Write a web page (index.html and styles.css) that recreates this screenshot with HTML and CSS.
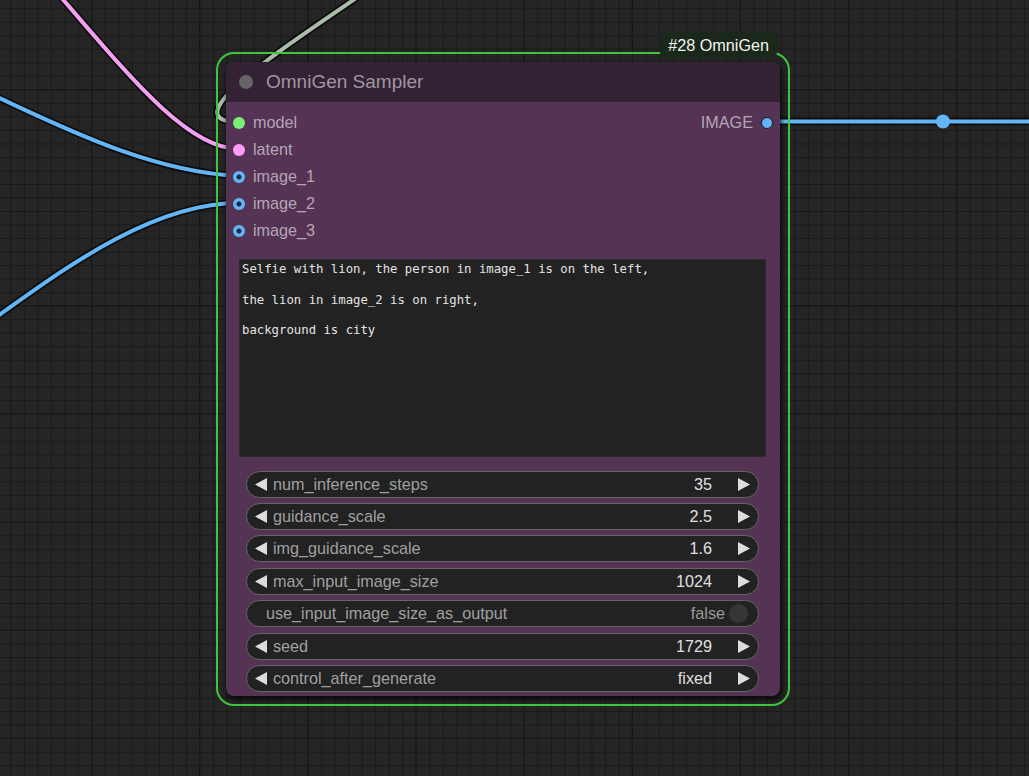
FILE: index.html
```html
<!DOCTYPE html>
<html>
<head>
<meta charset="utf-8">
<link rel="stylesheet" href="styles.css">
</head>
<body>
<div class="canvas">
  <svg class="wires" width="1029" height="776" viewBox="0 0 1029 776">
    <g class="wire-shadow">
      <path d="M365 -8 C280 50, 170 122, 239 122"/>
      <path d="M60 -4 C133 81, 189 149, 239 149"/>
      <path d="M-5 96 C60 126, 150 172, 239 176"/>
      <path d="M-5 318 C60 272, 150 203, 239 203"/>
      <path d="M767 121.5 L1040 121.5"/>
    </g>
    <path class="wire wire-model" d="M365 -8 C280 50, 170 122, 239 122"/>
    <path class="wire wire-latent" d="M60 -4 C133 81, 189 149, 239 149"/>
    <path class="wire wire-image" d="M-5 96 C60 126, 150 172, 239 176"/>
    <path class="wire wire-image" d="M-5 318 C60 272, 150 203, 239 203"/>
    <path class="wire wire-image" d="M767 121.5 L1040 121.5"/>
    <circle class="wire-mid" cx="943" cy="121.5" r="7"/>
  </svg>

  <div class="node">
    <div class="badge">#28 OmniGen</div>
    <div class="title">
      <span class="title-dot"></span>
      <span class="title-text">OmniGen Sampler</span>
    </div>
    <div class="slots">
      <div class="inputs">
        <div class="slot"><span class="dot dot-model"></span><span>model</span></div>
        <div class="slot"><span class="dot dot-latent"></span><span>latent</span></div>
        <div class="slot"><span class="dot dot-image"></span><span>image_1</span></div>
        <div class="slot"><span class="dot dot-image"></span><span>image_2</span></div>
        <div class="slot"><span class="dot dot-image"></span><span>image_3</span></div>
      </div>
      <div class="outputs">
        <div class="slot"><span>IMAGE</span><span class="dot dot-out"></span></div>
      </div>
    </div>
    <div class="prompt">Selfie with lion, the person in image_1 is on the left,

the lion in image_2 is on right,

background is city</div>
    <div class="widgets">
      <div class="widget">
        <svg class="arrow" width="12" height="13" viewBox="0 0 12 13"><polygon points="0,6.5 12,0 12,13"/></svg>
        <span class="w-label">num_inference_steps</span>
        <span class="w-value">35</span>
        <svg class="arrow" width="12" height="13" viewBox="0 0 12 13"><polygon points="12,6.5 0,0 0,13"/></svg>
      </div>
      <div class="widget">
        <svg class="arrow" width="12" height="13" viewBox="0 0 12 13"><polygon points="0,6.5 12,0 12,13"/></svg>
        <span class="w-label">guidance_scale</span>
        <span class="w-value">2.5</span>
        <svg class="arrow" width="12" height="13" viewBox="0 0 12 13"><polygon points="12,6.5 0,0 0,13"/></svg>
      </div>
      <div class="widget">
        <svg class="arrow" width="12" height="13" viewBox="0 0 12 13"><polygon points="0,6.5 12,0 12,13"/></svg>
        <span class="w-label">img_guidance_scale</span>
        <span class="w-value">1.6</span>
        <svg class="arrow" width="12" height="13" viewBox="0 0 12 13"><polygon points="12,6.5 0,0 0,13"/></svg>
      </div>
      <div class="widget">
        <svg class="arrow" width="12" height="13" viewBox="0 0 12 13"><polygon points="0,6.5 12,0 12,13"/></svg>
        <span class="w-label">max_input_image_size</span>
        <span class="w-value">1024</span>
        <svg class="arrow" width="12" height="13" viewBox="0 0 12 13"><polygon points="12,6.5 0,0 0,13"/></svg>
      </div>
      <div class="widget toggle">
        <span class="w-label">use_input_image_size_as_output</span>
        <span class="t-value">false</span>
        <span class="knob"></span>
      </div>
      <div class="widget">
        <svg class="arrow" width="12" height="13" viewBox="0 0 12 13"><polygon points="0,6.5 12,0 12,13"/></svg>
        <span class="w-label">seed</span>
        <span class="w-value">1729</span>
        <svg class="arrow" width="12" height="13" viewBox="0 0 12 13"><polygon points="12,6.5 0,0 0,13"/></svg>
      </div>
      <div class="widget">
        <svg class="arrow" width="12" height="13" viewBox="0 0 12 13"><polygon points="0,6.5 12,0 12,13"/></svg>
        <span class="w-label">control_after_generate</span>
        <span class="w-value">fixed</span>
        <svg class="arrow" width="12" height="13" viewBox="0 0 12 13"><polygon points="12,6.5 0,0 0,13"/></svg>
      </div>
    </div>
  </div>
</div>
</body>
</html>
```

FILE: styles.css
```css
* { box-sizing: border-box; }

html, body {
  margin: 0;
  padding: 0;
  background: #232323;
  font-family: "Liberation Sans", Arial, sans-serif;
}

.canvas {
  position: relative;
  width: 1029px;
  height: 776px;
  overflow: hidden;
  background-color: #252525;
  background-image:
    linear-gradient(90deg, #171717 1px, transparent 1px),
    linear-gradient(180deg, #171717 1px, transparent 1px),
    linear-gradient(90deg, #1a1a1a 1px, transparent 1px),
    linear-gradient(180deg, #1a1a1a 1px, transparent 1px);
  background-size: 108.13px 108.13px, 108.13px 108.13px, 13.516px 13.516px, 13.516px 13.516px;
  background-position: 91px 0, 0 89px, 10.3px 0, 0 8.3px;
}

.wires {
  position: absolute;
  left: 0;
  top: 0;
}

.wire-shadow path {
  fill: none;
  stroke: rgba(0, 0, 0, 0.65);
  stroke-width: 7.5;
}

.wire {
  fill: none;
  stroke-width: 4;
}

.wire-model { stroke: #aabcaa; }
.wire-latent { stroke: #f4a0f2; }
.wire-image { stroke: #64b5f6; }

.wire-mid {
  fill: #64b5f6;
}

/* node */
.node {
  position: absolute;
  left: 226px;
  top: 62px;
  width: 554px;
  height: 634px;
  background: #553355;
  border-radius: 8px;
  box-shadow: 1px 3px 4px 1px rgba(0, 0, 0, 0.65);
  display: flex;
  flex-direction: column;
}

.node::before {
  content: "";
  position: absolute;
  left: -10px;
  top: -10px;
  right: -10px;
  bottom: -10px;
  border: 2px solid #3ec43e;
  border-radius: 18px;
  pointer-events: none;
}

.badge {
  position: absolute;
  right: 3px;
  top: -30px;
  height: 26px;
  padding: 0 8px;
  background: #1a281a;
  border-radius: 6px;
  color: #f2f2f2;
  font-size: 16.2px;
  line-height: 26px;
  z-index: 2;
}

.title {
  height: 40px;
  flex: none;
  background: #332233;
  border-radius: 8px 8px 0 0;
  display: flex;
  align-items: center;
  gap: 13px;
  padding-left: 13px;
}

.title-dot {
  width: 14px;
  height: 14px;
  border-radius: 50%;
  background: #676367;
  flex: none;
}

.title-text {
  color: #a096a0;
  font-size: 19px;
}

.slots {
  display: flex;
  justify-content: space-between;
  padding-top: 7px;
}

.inputs { padding-left: 7px; }
.outputs { padding-right: 7px; }

.slot {
  height: 27px;
  display: flex;
  align-items: center;
  gap: 8px;
  color: #b4a6b4;
  font-size: 16.2px;
}

.dot {
  width: 12px;
  height: 12px;
  border-radius: 50%;
  flex: none;
}

.dot-model { background: #7af07a; }
.dot-latent { background: #ff9cf9; }
.dot-image {
  background: radial-gradient(circle, #1d2d45 0 2.2px, #64b5f6 2.9px);
}
.dot-out {
  background: #64b5f6;
  border: 1.5px solid #1a1a2a;
}

.prompt {
  margin: 15px 14px 0 13px;
  height: 198px;
  flex: none;
  background: #222;
  border: 1px solid #2c2c2c;
  padding: 2px 2px;
  color: #e4e4e4;
  font-family: "DejaVu Sans Mono", "Liberation Mono", monospace;
  font-size: 12.3px;
  line-height: 15.25px;
  white-space: pre-wrap;
}

.widgets {
  margin: 13.7px 21px 0 20px;
  display: flex;
  flex-direction: column;
  gap: 5.4px;
}

.widget {
  height: 27px;
  border: 1px solid #666;
  border-radius: 14px;
  background: #222;
  display: flex;
  align-items: center;
  padding: 0 8px 0 8px;
  font-size: 16.2px;
}

.arrow {
  flex: none;
  fill: #dddddd;
}

.w-label {
  color: #a0a0a0;
  margin-left: 6px;
  flex: 1;
}

.w-value {
  color: #e0e0e0;
  margin-right: 26px;
}

.toggle {
  padding: 0 10px 0 19px;
}

.toggle .w-label {
  margin-left: 0;
}

.t-value {
  color: #9a9a9a;
  margin-right: 4px;
}

.knob {
  width: 19px;
  height: 19px;
  border-radius: 50%;
  background: #363636;
}
```
